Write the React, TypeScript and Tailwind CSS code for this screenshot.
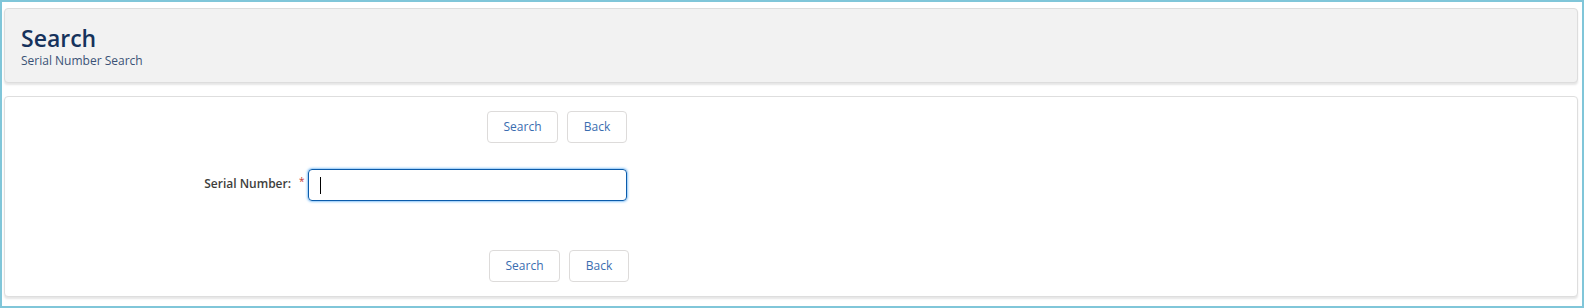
// Serial Number Search page
// ━━━━━━━━━━━━━━━━━━━━━━━━━━━━━━━━━━━━━━━━━━━━━━━━━━━━━━━━━━━━━━━━━━━━━━

const font = { fontFamily: '"Open Sans", "Liberation Sans", sans-serif' };

interface ActionRowProps {
  className?: string;
}

function ActionRow({ className = "" }: ActionRowProps) {
  return (
    <div className={`flex justify-end gap-[9px] ${className}`}>
      <button className="h-[32px] w-[71px] rounded-[4px] border border-[#dddbda] bg-white text-[12px] text-[#3a6db0]">
        Search
      </button>
      <button className="h-[32px] w-[60px] rounded-[4px] border border-[#dddbda] bg-white text-[12px] text-[#3a6db0]">
        Back
      </button>
    </div>
  );
}

export default function App() {
  return (
    <div
      className="w-[1584px] h-[308px] border-2 border-[#80c6d9] bg-white pl-[2px] pr-[4px] pt-[6px] flex flex-col"
      style={font}
    >
      {/* Header */}
      <div className="h-[75px] rounded-[4px] border border-[#dddddd] bg-[#f2f2f2] shadow-[0_2px_2px_rgba(0,0,0,0.10)] pl-[16px] pt-[17px]">
        <div className="text-[23px] leading-[24px] font-semibold text-[#16325c]">Search</div>
        <div className="mt-[3px] text-[12px] leading-[16px] text-[#3b5276]">Serial Number Search</div>
      </div>

      {/* Body */}
      <div className="mt-[13px] h-[201px] rounded-[4px] border border-[#dedede] bg-white shadow-[0_2px_2px_rgba(0,0,0,0.10)] pt-[14px]">
        <div className="w-[622px]">
          <ActionRow />

          <div className="mt-[26px] flex items-center">
            <div className="w-[286px] text-right text-[12px] font-semibold text-[#3e3e3c] -mt-[3px]">
              Serial Number:
            </div>
            <div className="w-[17px] self-start pt-[5px] pl-[8px] text-[10px] text-[#c23934]">*</div>
            <div className="h-[32px] w-[319px] rounded-[4px] border border-[#0b5cab] shadow-[0_0_3px_#1589ee] flex items-center pl-[11px]">
              <span className="block h-[17px] w-[1px] bg-black" />
            </div>
          </div>

          <ActionRow className="mt-[49px] mr-[-2px]" />
        </div>
      </div>
    </div>
  );
}
